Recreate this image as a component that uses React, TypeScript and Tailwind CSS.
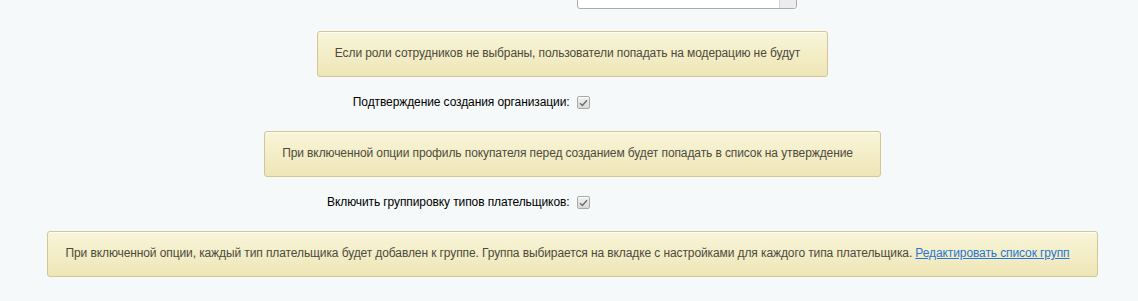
import React from 'react';

function Note({ children }: { children: React.ReactNode }) {
  return (
    <div className="flex justify-center">
      <div className="whitespace-nowrap rounded-[3px] border border-[#d3c595] bg-gradient-to-b from-[#f8f5d9] to-[#efe6b6] pt-[14px] pb-[15px] pl-[17px] pr-[27px] text-[12px] leading-[15px] tracking-[-0.1px] text-[#4c4a3c] shadow-[inset_0_1px_0_rgba(255,255,255,0.7)]">
        {children}
      </div>
    </div>
  );
}

function Checkbox() {
  return (
    <span className="inline-flex h-[13px] w-[13px] items-center justify-center rounded-[2px] border border-[#a9a9a9] bg-gradient-to-b from-[#f2f2f2] to-[#d9d9d9] shadow-[inset_0_1px_0_#fff]">
      <svg width="9" height="8" viewBox="0 0 9 8" fill="none">
        <path d="M1 4.2 L3.4 6.5 L8 1.2" stroke="#6e6e6e" strokeWidth="1.5" />
      </svg>
    </span>
  );
}

function OptionRow({ label }: { label: string }) {
  return (
    <div className="grid grid-cols-2 items-center pt-[18px] pb-[21px] text-[12px] leading-[15px] tracking-[-0.1px] text-black">
      <div className="pr-[3px] text-right">{label}</div>
      <div className="flex pl-[4px]">
        <Checkbox />
      </div>
    </div>
  );
}

export default function App() {
  return (
    <div className="h-[301px] w-[1138px] overflow-hidden bg-[#f5f9f9] pl-[7px] font-['Liberation_Sans',Arial,sans-serif]">
      {/* select cut off at top */}
      <div className="grid grid-cols-2">
        <div />
        <div className="pl-[4px]">
          <div className="-mt-[15px] flex h-[24px] w-[220px] overflow-hidden rounded-b-[3px] border border-[#a5adb1] bg-white">
            <div className="flex-1" />
            <div className="w-[17px] border-l border-[#d4d4d4] bg-[#ececec]" />
          </div>
        </div>
      </div>

      <div className="pt-[22px]">
        <Note>Если роли сотрудников не выбраны, пользователи попадать на модерацию не будут</Note>
      </div>

      <OptionRow label="Подтверждение создания организации:" />

      <Note>При включенной опции профиль покупателя перед созданием будет попадать в список на утверждение</Note>

      <OptionRow label="Включить группировку типов плательщиков:" />

      <Note>
        При включенной опции, каждый тип плательщика будет добавлен к группе. Группа выбирается на вкладке с
        настройками для каждого типа плательщика.{' '}
        <a href="#" className="text-[#2675d7] underline">
          Редактировать список групп
        </a>
      </Note>
    </div>
  );
}
